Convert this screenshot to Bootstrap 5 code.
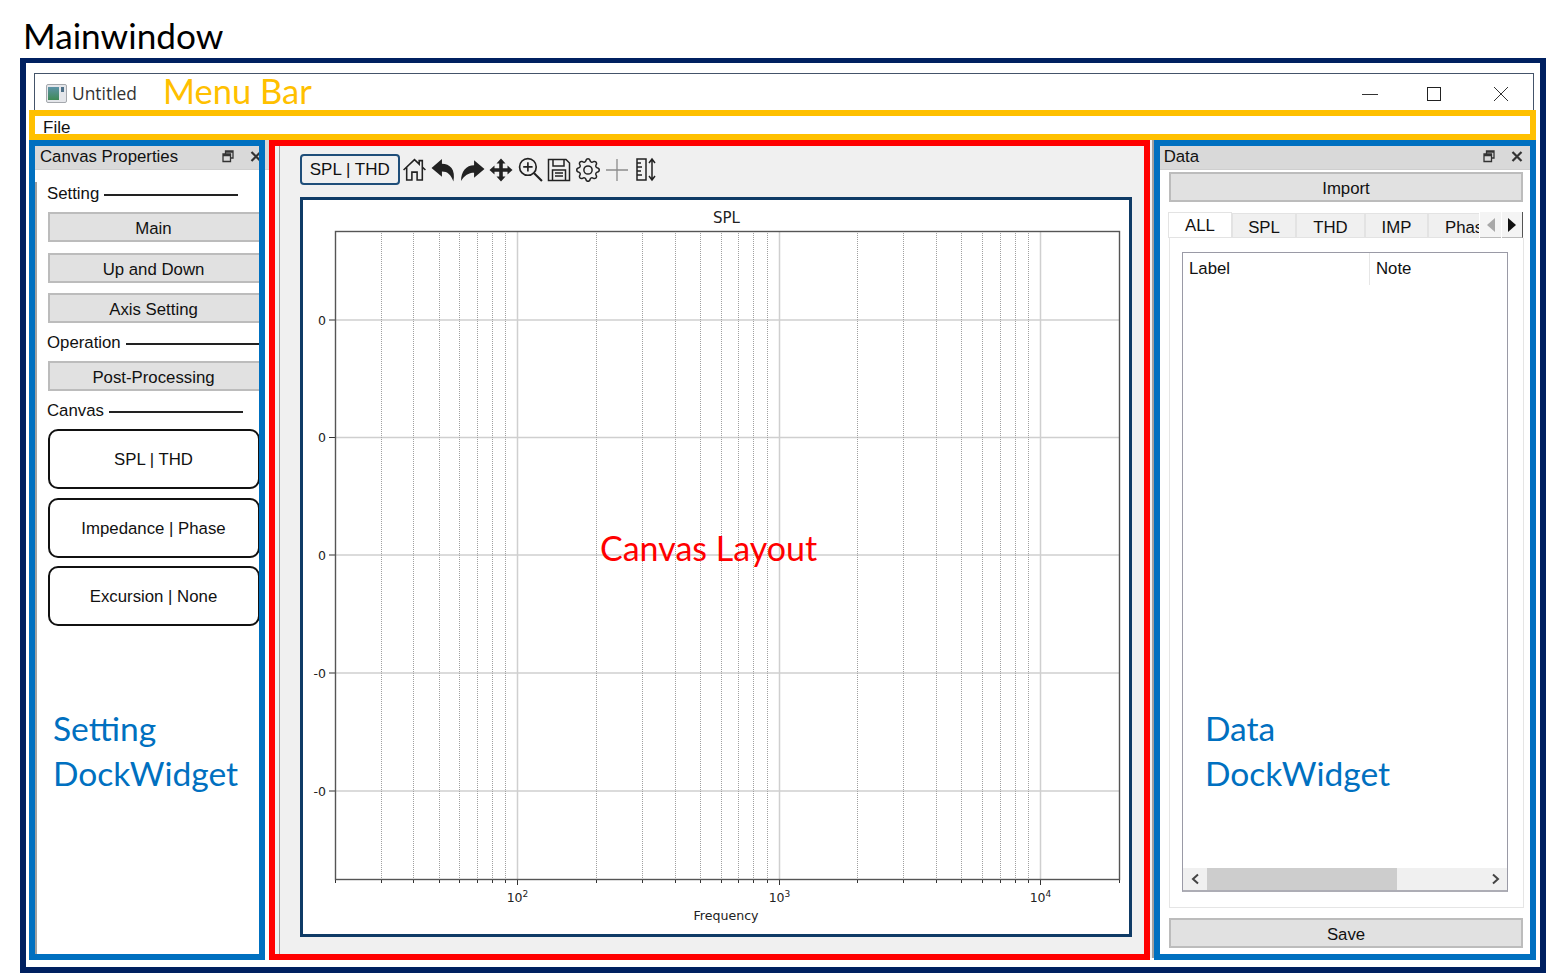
<!DOCTYPE html>
<html lang="en">
<head>
<meta charset="UTF-8">
<title>Mainwindow</title>
<link href="https://cdn.jsdelivr.net/npm/bootstrap@5.3.2/dist/css/bootstrap.min.css" rel="stylesheet">
<style>
body { margin: 0; background: #fff; font-family: "Liberation Sans", Arial, sans-serif; color: #111; }
.sheet { position: relative; width: 1546px; height: 973px; overflow: hidden; }
.sheet-title { height: 58px; padding: 12px 0 0 23px; font: 35.2px/46px Lato, sans-serif; color: #000; }

/* navy frame + app window */
.outer-frame { margin-left: 20px; width: 1526px; height: 915px; border: solid #002060; border-width: 5px 6px 6px; padding: 10px 0 0 8px; }
.app-window { width: 1500px; height: 885px; border: 1px solid #44546a; border-bottom: 0; background: #fff; }
.win-titlebar { height: 36px; flex: none; padding: 2px 0 0 11px; }
.win-name { font: 17.4px "Open Sans", sans-serif; color: #333; margin-left: 5px; }
.win-controls { margin-top: 1px; }
.slot-min { width: 58px; }
.slot-max { width: 70px; }
.slot-close { width: 64px; }
.win-menu { height: 30px; flex: none; padding: 8px 0 0 8px; font-size: 17px; line-height: 20px; }
.win-body { height: 818px; flex: none; overflow: hidden; }

/* docks */
.dock-left { width: 234px; overflow: hidden; }
.dock-right { width: 379px; background: #fff; }
.dock-head { height: 30px; padding: 7px 7px 0 5px; background: #d9d9d9; border-bottom: 1px solid #cfcfcf; font-size: 16.8px; line-height: 20px; }
.dock-right .dock-head { padding-right: 10px; }
.dock-head .head-tool { margin: 3px 0 0 16px; }
.dock-body { padding: 0 0 0 11px; border-left: 2px solid #a0a0a0; height: 788px; }
.group-row { height: 24px; margin-left: -1px; font-size: 16.8px; white-space: nowrap; }
.group-line { width: 134px; height: 2px; background: #222; margin-left: 5px; margin-top: 2px; flex: none; }
.qt-btn { display: block; width: 100%; height: 30px; padding: 2px 0 0; background: #e1e1e1; border: 2px solid #bcbcbc; border-radius: 0; font-size: 16.8px; line-height: 26px; color: #111; }
.qt-btn:hover { background: #e1e1e1; border-color: #bcbcbc; color: #111; }
.left-btn { width: 214px; padding-right: 3px; }
.left-btn + .left-btn { margin-top: 10.5px; }
.round-btn { display: block; width: 212px; height: 60px; padding: 2px 1px 0 0; background: #fff; border: 2px solid #111; border-radius: 10px; font-size: 16.8px; color: #111; }
.round-btn:hover { background: #fff; border-color: #111; color: #111; }
.round-btn + .round-btn { margin-top: 8.5px; }
.mt-first { margin-top: 12px; }
.mt-lbl { margin-top: 8px; }
.mt-btn { margin-top: 6px; }

/* centre */
.centre-pane { width: 885px; background: #f0f0f0; padding-left: 10px; border-right: 2px solid #a0a0a0; }
.centre-inner { height: 100%; border-left: 1px solid #9c9c9c; padding-left: 20px; padding-top: 14px; }
.tool-row { height: 31px; gap: 0; }
.tool-active { width: 99.5px; height: 31px; padding: 0; background: #f0f0f0; border: 2px solid #1f4e79; border-radius: 4px; font-size: 17px; line-height: 27px; color: #111; flex: none; }
.tool-active:hover { background: #f0f0f0; border-color: #1f4e79; color: #111; }
.tool-ico { width: 29px; height: 31px; display: flex; align-items: center; justify-content: center; flex: none; }
.plot-frame { margin-top: 12px; width: 832px; height: 740px; border: 3px solid #0f3b66; background: #fff; }
.plot-frame svg { display: block; }
.plot-frame text { font-family: "DejaVu Sans", sans-serif; fill: #222; }

/* data dock */
.data-wrap { padding: 2px 10px 0 15px; }
.tab-strip { margin-top: 10px; margin-left: -1px; height: 26px; }
.qt-tabs { flex-wrap: nowrap; overflow: hidden; width: 312px; height: 26px; border-bottom: 1px solid #e3e3e3; font-size: 16.8px; align-items: flex-end; }
.qt-tabs .nav-link { height: 24px; padding: 0; margin: 0; line-height: 27px; text-align: center; color: #111; background: #f0f0f0; border: 1px solid #e3e3e3; border-bottom: 0; border-radius: 0; white-space: nowrap; }
.qt-tabs .nav-link.active { height: 26px; line-height: 26px; background: #fff; color: #111; border-color: #e3e3e3; margin-bottom: -1px; }
.tab-all { width: 64px; flex: none; }
.tab-spl { width: 64px; flex: none; }
.tab-thd { width: 69px; flex: none; }
.tab-imp { width: 63px; flex: none; }
.tab-clip { width: 66px; flex: none; text-align: left; }
.qt-tabs .tab-clip .nav-link { padding-left: 16px; text-align: left; width: 66px; }
.tab-arrow { width: 21px; height: 26px; background: #f4f4f4; border-bottom: 1px solid #bbb; margin-left: 1px; }
.tab-arrow-end { border-right: 1px solid #555; }
.tab-pane-box { width: 355px; height: 670px; border: 1px solid #e5e5e5; border-top: 0; padding: 14px 0 0 12px; }
.list-box { width: 326px; height: 640px; border: 1px solid #9a9aa6; border-bottom: 2px solid #adadb5; font-size: 16.8px; }
.list-head { height: 32px; }
.list-cell-a { width: 187px; padding: 3px 0 0 6px; border-right: 1px solid #e6e6e6; }
.list-cell-b { padding: 3px 0 0 6px; }
.hscroll { height: 22px; background: #f0f0f0; }
.hscroll-end { width: 24px; }
.hscroll-thumb { width: 190px; background: #cdcdcd; }
.save-gap { margin-top: 10px; }

/* annotation boxes laid over the screenshot */
.anno { position: absolute; border: 6px solid; pointer-events: none; }
.anno-menu { left: 29px; top: 110px; width: 1507px; height: 30px; border-color: #ffc000; }
.anno-set { left: 29px; top: 140px; width: 236px; height: 820px; border-color: #0070c0; }
.anno-canvas { left: 269px; top: 140px; width: 881px; height: 820px; border-color: #ff0000; }
.anno-data { left: 1154px; top: 140px; width: 382px; height: 820px; border-color: #0070c0; }
.anno-text { position: absolute; font: 34px/44px Lato, sans-serif; white-space: nowrap; }
.txt-menu { left: 163px; top: 69px; font-size: 34.5px; color: #ffc000; }
.txt-canvas { left: 600px; top: 526px; color: #ff0000; }
.txt-set { left: 53px; top: 706px; font-size: 33.6px; line-height: 45px; color: #0070c0; }
.txt-data { left: 1205px; top: 706px; font-size: 33.6px; line-height: 45px; color: #0070c0; }
</style>
</head>
<body>
<div class="sheet">
  <div class="sheet-title">Mainwindow</div>
  <div class="outer-frame">
    <div class="app-window d-flex flex-column">
      <div class="win-titlebar d-flex align-items-center">
        <svg width="21" height="19" viewBox="0 0 21 19"><defs><linearGradient id="appg" x1="0" y1="0" x2="0" y2="1"><stop offset="0" stop-color="#5d93a8"/><stop offset="1" stop-color="#3f8a55"/></linearGradient></defs><rect x=".5" y=".5" width="20" height="18" rx="1.5" fill="#e4e6ea" stroke="#a5a8ad"/><rect x="2" y="3" width="11" height="13" fill="url(#appg)"/><rect x="15" y="3" width="3" height="5" fill="#4d6f87"/></svg>
        <span class="win-name">Untitled</span>
        <div class="win-controls d-flex ms-auto">
          <div class="slot-min d-flex justify-content-center"><svg width="16" height="16"><path d="M0 8.5H16" stroke="#333"/></svg></div>
          <div class="slot-max d-flex justify-content-center"><svg width="16" height="16"><rect x="1.5" y="1.5" width="13" height="13" fill="none" stroke="#222"/></svg></div>
          <div class="slot-close d-flex justify-content-center"><svg width="16" height="16"><path d="M1 1L15 15M15 1L1 15" stroke="#333"/></svg></div>
        </div>
      </div>
      <div class="win-menu">File</div>
      <div class="win-body d-flex">
        <div class="dock-left">
          <div class="dock-head d-flex align-items-start">
            <span>Canvas Properties</span>
            <span class="ms-auto d-flex">
              <svg class="head-tool" width="12" height="13" viewBox="0 0 12 13"><path d="M3.5 3.5V1H11V8H8.5M1 4H8.5V11.5H1ZM1 5.5H8.5M3.5 2.2H11" fill="none" stroke="#333" stroke-width="1.3"/></svg>
              <svg class="head-tool" width="12" height="13" viewBox="0 0 12 13"><path d="M1.5 2L10.5 11M10.5 2L1.5 11" stroke="#333" stroke-width="2.2"/></svg>
            </span>
          </div>
          <div class="dock-body">
            <div class="group-row d-flex align-items-center mt-first">Setting<span class="group-line"></span></div>
            <div class="mt-btn">
              <button class="btn qt-btn left-btn" type="button">Main</button>
              <button class="btn qt-btn left-btn" type="button">Up and Down</button>
              <button class="btn qt-btn left-btn" type="button">Axis Setting</button>
            </div>
            <div class="group-row d-flex align-items-center mt-lbl">Operation<span class="group-line"></span></div>
            <div class="mt-btn"><button class="btn qt-btn left-btn" type="button">Post-Processing</button></div>
            <div class="group-row d-flex align-items-center mt-lbl">Canvas<span class="group-line"></span></div>
            <div class="mt-btn">
              <button class="btn round-btn" type="button">SPL | THD</button>
              <button class="btn round-btn" type="button">Impedance | Phase</button>
              <button class="btn round-btn" type="button">Excursion | None</button>
            </div>
          </div>
        </div>

        <div class="centre-pane">
          <div class="centre-inner">
            <div class="tool-row d-flex align-items-center">
              <button class="btn tool-active" type="button">SPL | THD</button>
              <span class="tool-ico"><svg width="25" height="25" viewBox="0 0 24 24" fill="none" stroke="#222" stroke-width="1.5"><path d="M1.5 12.5L12 2.5L16.5 6.8V3.5H19.5V9.7L22.5 12.5M4.5 10V22H9.5V14.5H14.5V22H19.5V10"/></svg></span>
              <span class="tool-ico"><svg width="25" height="25" viewBox="0 0 24 24" fill="#222"><path d="M10.5 2L0.5 10.5L10.5 19V14C16 14 19 17 21.5 23.5C24 12 18 6.5 10.5 6.5Z"/></svg></span>
              <span class="tool-ico"><svg width="25" height="25" viewBox="0 0 24 24" fill="#222"><path d="M13.5 3L23.5 11.5L13.5 20V15C8 15 4.5 17.5 1 23C1 14 6 8 13.5 8Z"/></svg></span>
              <span class="tool-ico"><svg width="24" height="24" viewBox="0 0 24 24" fill="#222"><path d="M12 0.5L16.5 5.5H13.8V10.2H18.5V7.5L23.5 12L18.5 16.5V13.8H13.8V18.5H16.5L12 23.5L7.5 18.5H10.2V13.8H5.5V16.5L0.5 12L5.5 7.5V10.2H10.2V5.5H7.5Z"/></svg></span>
              <span class="tool-ico"><svg width="25" height="25" viewBox="0 0 24 24" fill="none" stroke="#222"><circle cx="9.5" cy="9.5" r="8" stroke-width="1.6"/><path d="M5 9.5H14M9.5 5V14" stroke-width="1.6"/><path d="M15.5 15.5L23 23" stroke-width="2"/></svg></span>
              <span class="tool-ico"><svg width="24" height="24" viewBox="0 0 24 24" fill="none" stroke="#222" stroke-width="1.5"><path d="M1.5 1.5H19L22.5 5V22.5H1.5ZM6 1.5V8H17V1.5M5.5 22.5V12H18.5V22.5M8 15H16M8 18H16"/></svg></span>
              <span class="tool-ico"><svg width="24" height="24" viewBox="0 0 16 16" fill="#222"><path d="M8 4.754a3.246 3.246 0 1 0 0 6.492 3.246 3.246 0 0 0 0-6.492zM5.754 8a2.246 2.246 0 1 1 4.492 0 2.246 2.246 0 0 1-4.492 0z"/><path d="M9.796 1.343c-.527-1.79-3.065-1.79-3.592 0l-.094.319a.873.873 0 0 1-1.255.52l-.292-.16c-1.64-.892-3.433.902-2.54 2.541l.159.292a.873.873 0 0 1-.52 1.255l-.319.094c-1.79.527-1.79 3.065 0 3.592l.319.094a.873.873 0 0 1 .52 1.255l-.16.292c-.892 1.64.901 3.434 2.541 2.54l.292-.159a.873.873 0 0 1 1.255.52l.094.319c.527 1.79 3.065 1.79 3.592 0l.094-.319a.873.873 0 0 1 1.255-.52l.292.16c1.64.893 3.434-.902 2.54-2.541l-.159-.292a.873.873 0 0 1 .52-1.255l.319-.094c1.79-.527 1.79-3.065 0-3.592l-.319-.094a.873.873 0 0 1-.52-1.255l.16-.292c.893-1.64-.902-3.433-2.541-2.54l-.292.159a.873.873 0 0 1-1.255-.52l-.094-.319zm-2.633.283c.246-.835 1.428-.835 1.674 0l.094.319a1.873 1.873 0 0 0 2.693 1.115l.291-.16c.764-.415 1.6.42 1.184 1.185l-.159.292a1.873 1.873 0 0 0 1.116 2.692l.318.094c.835.246.835 1.428 0 1.674l-.319.094a1.873 1.873 0 0 0-1.115 2.693l.16.291c.415.764-.42 1.6-1.185 1.184l-.291-.159a1.873 1.873 0 0 0-2.693 1.116l-.094.318c-.246.835-1.428.835-1.674 0l-.094-.319a1.873 1.873 0 0 0-2.692-1.115l-.292.16c-.764.415-1.6-.42-1.184-1.185l.159-.291A1.873 1.873 0 0 0 1.945 8.93l-.319-.094c-.835-.246-.835-1.428 0-1.674l.319-.094A1.873 1.873 0 0 0 3.06 4.377l-.16-.292c-.415-.764.42-1.6 1.185-1.184l.292.159a1.873 1.873 0 0 0 2.692-1.115l.094-.319z"/></svg></span>
              <span class="tool-ico"><svg width="24" height="24" viewBox="0 0 24 24" stroke="#8c8c8c" stroke-width="1.3"><path d="M1 12H23M12 1V23"/></svg></span>
              <span class="tool-ico"><svg width="22" height="25" viewBox="0 0 22 25" fill="none" stroke="#222" stroke-width="1.5"><path d="M2 2H11V23H2ZM2 6H6M2 10H7M2 14H6M2 18H7"/><path d="M17 2V23M14 6L17 2L20 6M14 19L17 23L20 19"/></svg></span>
            </div>
            <div class="plot-frame">
              <svg id="plot" width="826" height="734" viewBox="303 200 826 734"></svg>
            </div>
          </div>
        </div>

        <div class="dock-right">
          <div class="dock-head d-flex align-items-start">
            <span>&nbsp;Data</span>
            <span class="ms-auto d-flex">
              <svg class="head-tool" width="12" height="13" viewBox="0 0 12 13"><path d="M3.5 3.5V1H11V8H8.5M1 4H8.5V11.5H1ZM1 5.5H8.5M3.5 2.2H11" fill="none" stroke="#333" stroke-width="1.3"/></svg>
              <svg class="head-tool" width="12" height="13" viewBox="0 0 12 13"><path d="M1.5 2L10.5 11M10.5 2L1.5 11" stroke="#333" stroke-width="2.2"/></svg>
            </span>
          </div>
          <div class="data-wrap">
            <button class="btn qt-btn" type="button">Import</button>
            <div class="tab-strip d-flex">
              <ul class="nav nav-tabs qt-tabs">
                <li class="nav-item tab-all"><a class="nav-link active" href="#">ALL</a></li>
                <li class="nav-item tab-spl"><a class="nav-link" href="#">SPL</a></li>
                <li class="nav-item tab-thd"><a class="nav-link" href="#">THD</a></li>
                <li class="nav-item tab-imp"><a class="nav-link" href="#">IMP</a></li>
                <li class="nav-item tab-clip"><a class="nav-link" href="#">Phase</a></li>
              </ul>
              <div class="tab-arrow d-flex align-items-center justify-content-center"><svg width="8" height="14"><path d="M8 0V14L0 7Z" fill="#a8a8a8"/></svg></div>
              <div class="tab-arrow tab-arrow-end d-flex align-items-center justify-content-center"><svg width="8" height="14"><path d="M0 0V14L8 7Z" fill="#111"/></svg></div>
            </div>
            <div class="tab-pane-box">
              <div class="list-box d-flex flex-column">
                <div class="list-head d-flex">
                  <div class="list-cell-a">Label</div>
                  <div class="list-cell-b">Note</div>
                </div>
                <div class="hscroll d-flex mt-auto">
                  <div class="hscroll-end d-flex align-items-center justify-content-center"><svg width="9" height="12"><path d="M7 1.5L2 6L7 10.5" fill="none" stroke="#444" stroke-width="2"/></svg></div>
                  <div class="hscroll-thumb"></div>
                  <div class="hscroll-end d-flex align-items-center justify-content-center ms-auto"><svg width="9" height="12"><path d="M2 1.5L7 6L2 10.5" fill="none" stroke="#444" stroke-width="2"/></svg></div>
                </div>
              </div>
            </div>
            <button class="btn qt-btn save-gap" type="button">Save</button>
          </div>
        </div>
      </div>
    </div>
  </div>

  <div class="anno anno-menu"></div>
  <div class="anno anno-set"></div>
  <div class="anno anno-canvas"></div>
  <div class="anno anno-data"></div>
  <div class="anno-text txt-menu">Menu Bar</div>
  <div class="anno-text txt-canvas">Canvas Layout</div>
  <div class="anno-text txt-set">Setting<br>DockWidget</div>
  <div class="anno-text txt-data">Data<br>DockWidget</div>
</div>

<script src="https://cdn.jsdelivr.net/npm/bootstrap@5.3.2/dist/js/bootstrap.bundle.min.js"></script>
<script>
// log axis 20 Hz .. 20 kHz, coordinates are page pixels (see viewBox)
const left = 335, right = 1119, top_ = 231, bottom = 879;
const xOf = f => 517.4 + (Math.log10(f) - 2) * 261.3;
let out = '';

[320, 437.5, 555, 673, 791].forEach((y, i) => {
    out += `<path d="M${left} ${y}H${right}" stroke="#cfcfcf" stroke-width="1.5"/>`;
    out += `<path d="M${left - 6} ${y}H${left}" stroke="#333"/>`;
    out += `<text x="326" y="${y + 4.5}" font-size="12.5" text-anchor="end">${i < 3 ? '0' : '-0'}</text>`;
});

[20, 30, 40, 50, 60, 70, 80, 90, 200, 300, 400, 500, 600, 700, 800, 900, 2000, 3000, 4000, 5000, 6000, 7000, 8000, 9000, 20000].forEach(f => {
    const x = Math.round(xOf(f)) + 0.5;
    out += `<path d="M${x} ${top_}V${bottom}" stroke="#a0a0a0" stroke-width="1" stroke-dasharray="1 1"/>`;
    out += `<path d="M${x} ${bottom}v4" stroke="#333"/>`;
});
[[100, 2], [1000, 3], [10000, 4]].forEach(([f, e]) => {
    const x = Math.round(xOf(f)) + 0.5;
    out += `<path d="M${x} ${top_}V${bottom}" stroke="#cfcfcf" stroke-width="1.5"/>`;
    out += `<path d="M${x} ${bottom}v6" stroke="#333"/>`;
    out += `<text x="${x}" y="902" font-size="12.5" text-anchor="middle">10<tspan dy="-5" font-size="9">${e}</tspan></text>`;
});

out += `<rect x="${left}.5" y="${top_}.5" width="${right - left}" height="${bottom - top_}" fill="none" stroke="#555" stroke-width="1.4"/>`;
out += `<text x="726.5" y="223" font-size="15" text-anchor="middle">SPL</text>`;
out += `<text x="726" y="920" font-size="12.6" text-anchor="middle">Frequency</text>`;
document.getElementById('plot').innerHTML = out;
</script>
</body>
</html>
